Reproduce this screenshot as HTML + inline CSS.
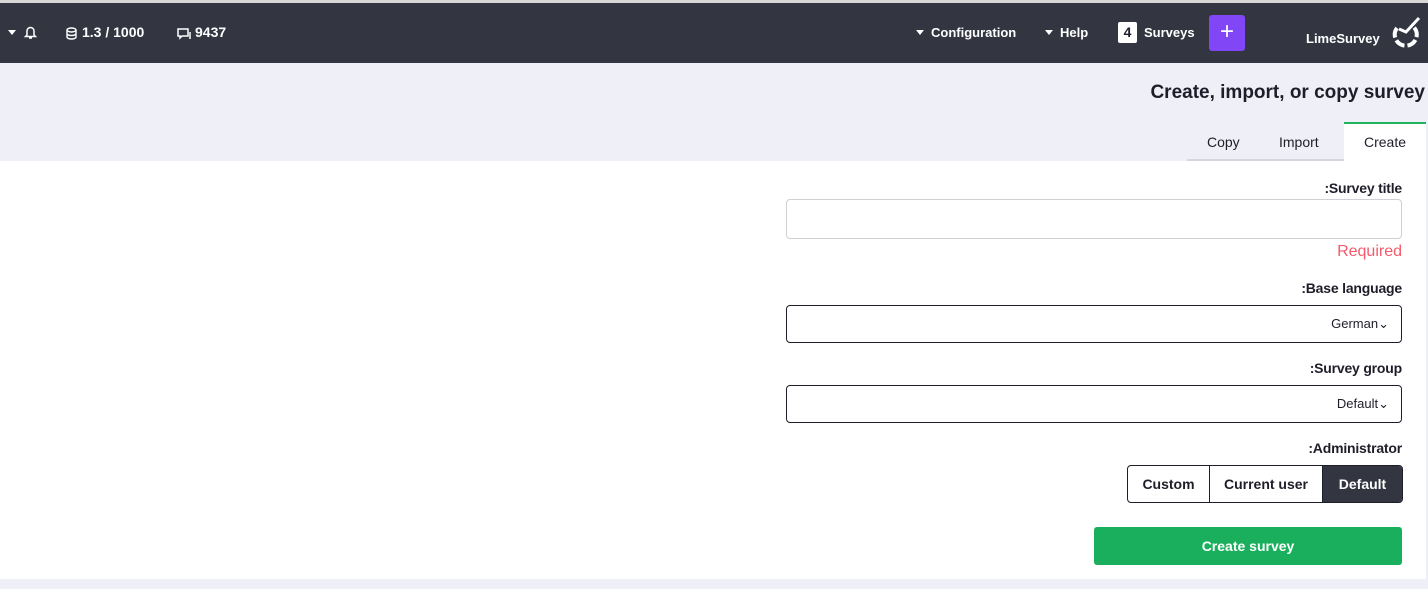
<!DOCTYPE html>
<html><head><meta charset="utf-8"><style>
*{box-sizing:border-box;margin:0;padding:0}
body{width:1428px;height:589px;overflow:hidden;background:#eeeff7;font-family:"Liberation Sans",sans-serif;color:#1e1e2a;position:relative}
.top{position:absolute;left:0;top:0;width:1428px;height:3px;background:#d8d8d8}
.nav{position:absolute;left:0;top:3px;width:1428px;height:60px;background:#333641;color:#fff;font-size:13px;font-weight:bold}
.nav span{position:absolute;top:22px}
.hdr{position:absolute;left:0;top:63px;width:1428px;height:98px;background:#eeeff7}
.title{position:absolute;right:3px;top:82px;font-size:19px;font-weight:bold;color:#1e1e2a}
.tab{position:absolute;top:134px;font-size:14px}
.content{position:absolute;left:0;top:161px;width:1426px;height:418px;background:#fff}
.lbl{position:absolute;right:26px;font-size:14px;font-weight:bold;color:#1e1e2a;letter-spacing:-0.2px}
.inp{position:absolute;left:786px;width:616px;border-radius:4px;background:#fff}
.sel{font-size:13px;text-align:right;padding-right:12px}
</style></head><body>
<div class="top"></div>
<div class="nav">
<svg style="position:absolute;left:8px;top:27px" width="8" height="5"><path d="M0 0L8 0L4 5Z" fill="#fff"/></svg>
<svg style="position:absolute;left:24px;top:22px" width="13" height="15" viewBox="0 0 13 15"><path d="M3 10V6a3.5 3.5 0 0 1 7 0v4l1.5 1.5H1.5Z M5 13h3" fill="none" stroke="#fff" stroke-width="1.5"/></svg>
<svg style="position:absolute;left:66px;top:24px" width="11" height="13" viewBox="0 0 11 13"><ellipse cx="5.5" cy="3" rx="4.5" ry="2" fill="none" stroke="#fff" stroke-width="1.4"/><path d="M1 3v7c0 1.2 2 2 4.5 2s4.5-.8 4.5-2V3M1 6.5c0 1.2 2 2 4.5 2s4.5-.8 4.5-2" fill="none" stroke="#fff" stroke-width="1.4"/></svg>
<span style="left:82px;font-size:14px;top:21px">1.3 / 1000</span>
<svg style="position:absolute;left:177px;top:25px" width="14" height="12" viewBox="0 0 14 12"><path d="M1 1h10v7H5l-2 2V8H1Z" fill="none" stroke="#fff" stroke-width="1.5"/><path d="M13 4v7" stroke="#fff" stroke-width="1.5"/></svg>
<span style="left:195px;font-size:14px;top:21px">9437</span>
<svg style="position:absolute;left:916px;top:27px" width="8" height="5"><path d="M0 0L8 0L4 5Z" fill="#fff"/></svg>
<span style="left:931px">Configuration</span>
<svg style="position:absolute;left:1045px;top:27px" width="8" height="5"><path d="M0 0L8 0L4 5Z" fill="#fff"/></svg>
<span style="left:1060px">Help</span>
<div style="position:absolute;left:1118px;top:19px;width:19px;height:21px;background:#fff;color:#1e1e2a;text-align:center;line-height:21px;border-radius:2px;font-size:14px">4</div>
<span style="left:1144px">Surveys</span>
<div style="position:absolute;left:1209px;top:12px;width:36px;height:36px;background:#8146f6;border-radius:3px;color:#fff;font-size:24px;font-weight:normal;text-align:center;line-height:34px">+</div>
<span style="left:1306px;top:28px">LimeSurvey</span>
<svg style="position:absolute;left:1389px;top:13px" width="32" height="36" viewBox="0 0 32 36"><path d="M8 12a11 11 0 1 0 14-3" fill="none" stroke="#fff" stroke-width="4" stroke-dasharray="10 3"/><path d="M10 13l7 3 13-14" fill="none" stroke="#fff" stroke-width="3"/></svg>
</div>
<div class="hdr"></div>
<div class="title">Create, import, or copy survey</div>
<div style="position:absolute;left:1187px;top:159px;width:157px;height:2px;background:#d5d6de"></div>
<div style="position:absolute;left:1344px;top:122px;width:82px;height:40px;background:#fff;border-top:2px solid #1db45c"></div>
<div class="tab" style="left:1207px">Copy</div>
<div class="tab" style="left:1279px">Import</div>
<div class="tab" style="left:1364px">Create</div>
<div class="content"></div>
<div class="lbl" style="top:180px">:Survey title</div>
<div class="inp" style="top:199px;height:40px;border:1px solid #cfcfd4"></div>
<div style="position:absolute;right:26px;top:243px;font-size:16px;color:#f45a6b">Required</div>
<div class="lbl" style="top:280px">:Base language</div>
<div class="inp sel" style="top:305px;height:38px;border:1px solid #1e1e2a;line-height:36px">German⌄</div>
<div class="lbl" style="top:360px">:Survey group</div>
<div class="inp sel" style="top:385px;height:38px;border:1px solid #1e1e2a;line-height:36px">Default⌄</div>
<div class="lbl" style="top:440px">:Administrator</div>
<div style="position:absolute;left:1127px;top:465px;width:276px;height:38px;border:1px solid #1e1e2a;border-radius:4px;overflow:hidden;display:flex;font-size:14px;font-weight:bold;line-height:36px;text-align:center">
<div style="width:82px;border-right:1px solid #1e1e2a">Custom</div>
<div style="width:113px;border-right:1px solid #1e1e2a">Current user</div>
<div style="flex:1;background:#333641;color:#fff">Default</div>
</div>
<div style="position:absolute;left:1094px;top:527px;width:308px;height:38px;background:#1aaf5d;border-radius:3px;color:#fff;font-size:14px;font-weight:bold;text-align:center;line-height:38px">Create survey</div>
</body></html>
